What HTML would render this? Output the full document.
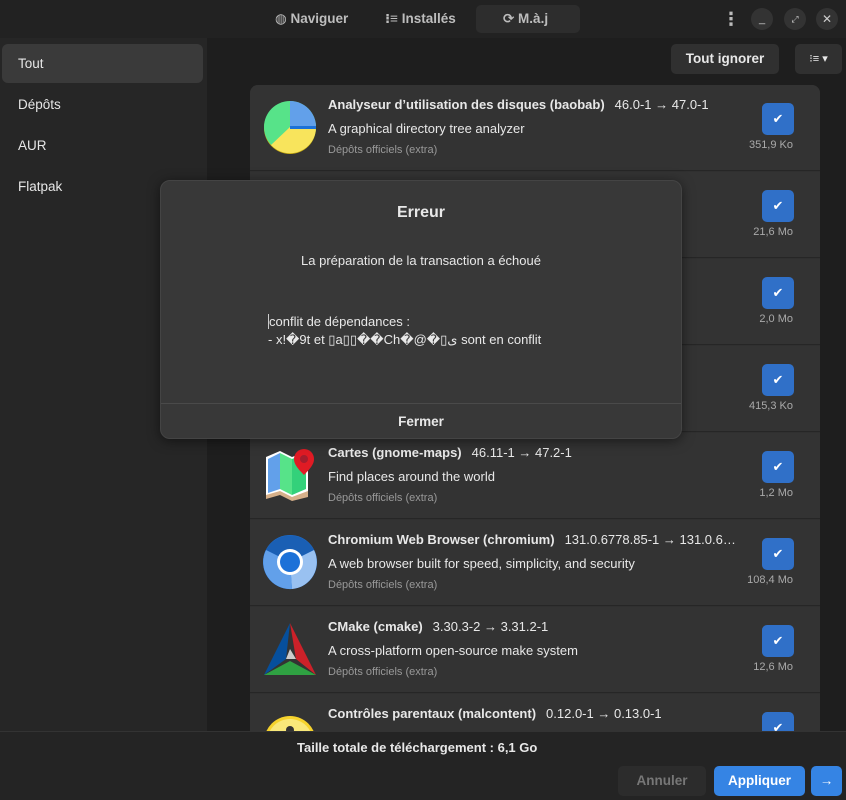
<!DOCTYPE html>
<html><head><meta charset="utf-8"><style>
*{box-sizing:border-box;margin:0;padding:0}
body{width:846px;height:800px;background:#1e1e1e;font-family:"Liberation Sans","DejaVu Sans",sans-serif;color:#e8e8e8;position:relative;overflow:hidden;font-size:13px}
.hdr{position:absolute;left:0;top:0;width:846px;height:38px;background:#222}
.tab{position:absolute;top:5px;height:28px;line-height:28px;font-weight:bold;color:#bdbdbd;font-size:13.5px}
.side{position:absolute;left:0;top:38px;width:207px;height:693px;background:#262626}
.side div{position:absolute;left:18px;font-size:13.5px;color:#e6e6e6}
.sel{position:absolute;left:2px;top:44px;width:201px;height:39px;background:#3a3a3a;border-radius:6px}
.list{position:absolute;left:250px;top:85px;width:570px;height:646px;background:#303030;border-radius:8px 8px 0 0;overflow:hidden}
.row{position:absolute;left:0;width:570px;height:86px;background:#333;border-bottom:1px solid #262626}
.row .t{position:absolute;left:78px;top:12px;font-weight:bold;font-size:13px;white-space:nowrap}
.row .t span{font-weight:normal;margin-left:10px}
.row .d{position:absolute;left:78px;top:36px;font-size:13px}
.row .r{position:absolute;left:78px;top:59px;font-size:11px;color:#999}
.cb{position:absolute;left:512px;top:18px;width:32px;height:32px;background:#3070c8;border-radius:5px;color:#fff;text-align:center;line-height:32px;font-size:13px;font-weight:bold}
.sz{position:absolute;right:27px;top:54px;font-size:11px;color:#aaa}
.ic{position:absolute;left:12px;top:14px;width:56px;height:56px}
.dlg{position:absolute;left:160px;top:180px;width:522px;height:259px;background:#383838;border-radius:10px;border:1px solid #444;box-shadow:0 2px 12px rgba(0,0,0,.5)}
.bot{position:absolute;left:0;top:731px;width:846px;height:69px;background:#242424;border-top:1px solid #333}
.btn{position:absolute;top:766px;height:30px;line-height:30px;text-align:center;border-radius:5px;font-weight:bold;font-size:13.5px}
</style></head><body>
<div class="hdr">
 <div class="tab" style="left:275px">◍ Naviguer</div>
 <div class="tab" style="left:385px">⁝≡ Installés</div>
 <div style="position:absolute;left:476px;top:5px;width:104px;height:28px;background:#2d2d2d;border-radius:5px"></div>
 <div class="tab" style="left:503px">⟳ M.à.j</div>
 <div style="position:absolute;left:722px;top:8px;color:#bbb;font-size:18px;font-weight:bold;line-height:22px">⋮</div>
 <div style="position:absolute;left:751px;top:8px;width:22px;height:22px;border-radius:11px;background:#333;color:#ccc;text-align:center;font-size:11px;line-height:22px">_</div>
 <div style="position:absolute;left:784px;top:8px;width:22px;height:22px;border-radius:11px;background:#333;color:#ccc;text-align:center;font-size:9px;line-height:22px">⤢</div>
 <div style="position:absolute;left:816px;top:8px;width:22px;height:22px;border-radius:11px;background:#333;color:#ccc;text-align:center;font-size:12px;line-height:22px">✕</div>
</div>
<div class="side"></div>
<div class="sel"></div>
<div class="side" style="background:none"><div style="top:18px">Tout</div><div style="top:59px">Dépôts</div><div style="top:100px">AUR</div><div style="top:141px">Flatpak</div></div>
<div style="position:absolute;left:671px;top:44px;width:108px;height:30px;background:#303030;border-radius:5px;text-align:center;line-height:30px;font-weight:bold;font-size:13.5px">Tout ignorer</div>
<div style="position:absolute;left:795px;top:44px;width:47px;height:30px;background:#303030;border-radius:5px;text-align:center;line-height:30px;font-size:11px">⁝≡ ▾</div>
<div class="list">
 <div class="row" style="top:0"><svg class="ic" viewBox="0 0 56 56"><circle cx="28" cy="29" r="26" fill="#c6a80f"/><circle cx="28" cy="28" r="26" fill="#57e389"/><path d="M28 28H54A26 26 0 0 1 9 46Z" fill="#f8e45c"/><path d="M28 28V2A26 26 0 0 1 54 28Z" fill="#62a0ea"/><path d="M28 27H54V30H28Z" fill="#1c71d8"/></svg><div class="t">Analyseur d’utilisation des disques (baobab)<span>46.0-1 → 47.0-1</span></div><div class="d">A graphical directory tree analyzer</div><div class="r">Dépôts officiels (extra)</div><div class="cb">✔</div><div class="sz">351,9 Ko</div></div>
 <div class="row" style="top:87px"><div class="cb">✔</div><div class="sz">21,6 Mo</div></div>
 <div class="row" style="top:174px"><div class="cb">✔</div><div class="sz">2,0 Mo</div></div>
 <div class="row" style="top:261px"><div class="cb">✔</div><div class="sz">415,3 Ko</div></div>
 <div class="row" style="top:348px"><svg class="ic" viewBox="0 0 56 56"><path d="M4 14L18 8L30 14L46 8V50L30 54L18 48L4 52Z" fill="#d6b08a"/><path d="M4 10L18 4L30 10L46 4V44L30 50L18 44L4 48Z" fill="#fff"/><path d="M6 12L18 6V42L6 46Z" fill="#62a0ea"/><path d="M18 6L30 12V48L18 42Z" fill="#57e389"/><path d="M30 12L44 6V42L30 48Z" fill="#33d17a"/><path d="M42 28C34 20 32 16 32 12A10 10 0 0 1 52 12C52 16 50 20 42 28Z" fill="#e01b24"/><circle cx="42" cy="12" r="4" fill="#a51d2d"/></svg><div class="t">Cartes (gnome-maps)<span>46.11-1 → 47.2-1</span></div><div class="d">Find places around the world</div><div class="r">Dépôts officiels (extra)</div><div class="cb">✔</div><div class="sz">1,2 Mo</div></div>
 <div class="row" style="top:435px"><svg class="ic" viewBox="0 0 56 56"><circle cx="28" cy="28" r="27" fill="#1c71d8"/><path d="M28 28L4 16A27 27 0 0 1 52 16Z" fill="#1a5fb4"/><path d="M28 28L52 16A27 27 0 0 1 30 55Z" fill="#99c1f1"/><path d="M28 28L30 55A27 27 0 0 1 4 16Z" fill="#62a0ea"/><circle cx="28" cy="28" r="13" fill="#fff"/><circle cx="28" cy="28" r="10" fill="#1c71d8"/></svg><div class="t">Chromium Web Browser (chromium)<span>131.0.6778.85-1 → 131.0.6…</span></div><div class="d">A web browser built for speed, simplicity, and security</div><div class="r">Dépôts officiels (extra)</div><div class="cb">✔</div><div class="sz">108,4 Mo</div></div>
 <div class="row" style="top:522px"><svg class="ic" viewBox="0 0 56 56"><path d="M28 2L2 54L24 38Z" fill="#064f9c"/><path d="M28 2L54 54L34 38Z" fill="#cc2129"/><path d="M2 54H54L28 40Z" fill="#2fa142"/><path d="M24 38L34 38L28 28Z" fill="#ccc"/></svg><div class="t">CMake (cmake)<span>3.30.3-2 → 3.31.2-1</span></div><div class="d">A cross-platform open-source make system</div><div class="r">Dépôts officiels (extra)</div><div class="cb">✔</div><div class="sz">12,6 Mo</div></div>
 <div class="row" style="top:609px"><svg class="ic" viewBox="0 0 56 56"><circle cx="28" cy="34" r="26" fill="#f6d32d"/><circle cx="28" cy="34" r="23" fill="#f9e87a"/><circle cx="28" cy="22" r="4" fill="#333"/></svg><div class="t">Contrôles parentaux (malcontent)<span>0.12.0-1 → 0.13.0-1</span></div><div class="cb">✔</div></div>
</div>
<div class="dlg">
 <div style="position:absolute;top:23px;width:100%;text-align:center;font-weight:bold;font-size:16px">Erreur</div>
 <div style="position:absolute;top:72px;width:100%;text-align:center;font-size:13px">La préparation de la transaction a échoué</div>
 <div style="position:absolute;left:107px;top:132px;font-size:13px;line-height:18px"><span style="border-left:1px solid #ccc">conflit de dépendances :</span><br>- x!�9t et ▯a▯▯��Ch�@�▯ى sont en conflit</div>
 <div style="position:absolute;left:0;top:222px;width:100%;border-top:1px solid #4a4a4a"></div>
 <div style="position:absolute;top:233px;width:100%;text-align:center;font-weight:bold;font-size:13.5px">Fermer</div>
</div>
<div class="bot"><div style="position:absolute;left:297px;top:8px;font-weight:bold;font-size:13px">Taille totale de téléchargement : 6,1 Go</div></div>
<div class="btn" style="left:618px;width:88px;background:#2c2c2c;color:#777">Annuler</div>
<div class="btn" style="left:714px;width:91px;background:#3584e4;color:#fff">Appliquer</div>
<div class="btn" style="left:811px;width:31px;background:#3584e4;color:#fff">→</div>
</body></html>
